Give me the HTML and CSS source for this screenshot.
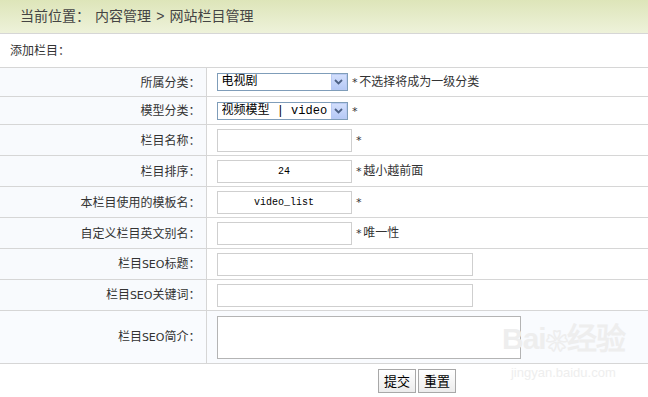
FILE: index.html
```html
<!DOCTYPE html>
<html lang="zh-CN">
<head>
<meta charset="utf-8">
<title>网站栏目管理</title>
<link rel="stylesheet" href="styles.css">
</head>
<body>
<div class="page">
  <div class="crumb">当前位置：<span class="crumb-gap"></span>内容管理 <span class="crumb-sep">&gt;</span> 网站栏目管理</div>
  <div class="title">添加栏目：</div>
  <table class="form">
    <tr class="row-sel">
      <th>所属分类：</th>
      <td><div class="field">
        <span class="combo"><select><option>电视剧</option></select><i class="combo-btn"><svg width="9" height="6" viewBox="0 0 9 6"><path d="M1 1 L4.5 4.5 L8 1" fill="none" stroke="#4d6185" stroke-width="1.8"/></svg></i></span>
        <span class="note"><b class="star">*</b>不选择将成为一级分类</span>
      </div></td>
    </tr>
    <tr class="row-sel row-sel2">
      <th>模型分类：</th>
      <td><div class="field">
        <span class="combo"><select><option>视频模型 | video</option></select><i class="combo-btn"><svg width="9" height="6" viewBox="0 0 9 6"><path d="M1 1 L4.5 4.5 L8 1" fill="none" stroke="#4d6185" stroke-width="1.8"/></svg></i></span>
        <span class="note"><b class="star">*</b></span>
      </div></td>
    </tr>
    <tr class="row-in">
      <th>栏目名称：</th>
      <td><div class="field"><input class="txt" type="text" value=""><span class="note"><b class="star">*</b></span></div></td>
    </tr>
    <tr class="row-in">
      <th>栏目排序：</th>
      <td><div class="field"><input class="txt center" type="text" value="24"><span class="note"><b class="star">*</b>越小越前面</span></div></td>
    </tr>
    <tr class="row-in">
      <th>本栏目使用的模板名：</th>
      <td><div class="field"><input class="txt center" type="text" value="video_list"><span class="note"><b class="star">*</b></span></div></td>
    </tr>
    <tr class="row-in">
      <th>自定义栏目英文别名：</th>
      <td><div class="field"><input class="txt" type="text" value=""><span class="note"><b class="star">*</b>唯一性</span></div></td>
    </tr>
    <tr class="row-in">
      <th>栏目<span class="lat">SEO</span>标题：</th>
      <td><div class="field"><input class="txt wide" type="text" value=""></div></td>
    </tr>
    <tr class="row-in">
      <th>栏目<span class="lat">SEO</span>关键词：</th>
      <td><div class="field"><input class="txt wide" type="text" value=""></div></td>
    </tr>
    <tr class="row-area">
      <th>栏目<span class="lat">SEO</span>简介：</th>
      <td><div class="field"><textarea class="area"></textarea></div></td>
    </tr>
    <tr class="row-btn">
      <td colspan="2" class="btn-cell"><div class="btns"><button type="submit" class="btn">提交</button><button type="reset" class="btn">重置</button></div></td>
    </tr>
  </table>
  <div class="watermark"><span class="wm-logo">Bai<span class="wm-paw">❀</span>经验</span><span class="wm-url">jingyan.baidu.com</span></div>
</div>
</body>
</html>
```

FILE: styles.css
```css
html, body {
  margin: 0;
  padding: 0;
  background: #fff;
}
body {
  font: 12px/1.2 "Noto Sans CJK SC", "Liberation Sans", sans-serif;
  color: #333;
}
.page {
  position: relative;
  width: 648px;
  overflow: hidden;
}
.crumb {
  height: 34px;
  line-height: 31px;
  box-sizing: border-box;
  padding-left: 20px;
  font-size: 14px;
  color: #444;
  background: linear-gradient(#dde5b9, #eef2da);
  border-bottom: 1px solid #d6d6d6;
}
.crumb-gap {
  display: inline-block;
  width: 5px;
}
.crumb-sep {
  font-family: "Liberation Sans", sans-serif;
  margin: 0 2px;
}
.title {
  height: 34px;
  box-sizing: border-box;
  line-height: 32px;
  padding-left: 10px;
  border-bottom: 1px solid #d6d6d6;
}
.form {
  width: 100%;
  border-collapse: collapse;
}
.form th {
  width: 206px;
  box-sizing: border-box;
  padding: 0 5px 0 0;
  text-align: right;
  font-weight: normal;
  background: #f8fafd;
  border-right: 1px solid #d6d6d6;
  border-bottom: 1px solid #d6d6d6;
  white-space: nowrap;
}
.form td {
  padding: 0 0 0 10px;
  border-bottom: 1px solid #d6d6d6;
}
.row-sel th, .row-sel td { height: 28px; }
.row-sel2 th, .row-sel2 td { height: 27px; }
.row-in th, .row-in td { height: 30px; }
.row-area th, .row-area td { height: 52px; background: #f9fbfe; }
.row-btn td { height: 33px; }
.lat {
  font-family: "DejaVu Sans", sans-serif;
  font-size: 11px;
}
.field {
  display: flex;
  align-items: center;
}
.combo {
  position: relative;
  display: inline-block;
  width: 131px;
  height: 18px;
}
.combo select {
  appearance: none;
  -webkit-appearance: none;
  width: 131px;
  height: 18px;
  box-sizing: border-box;
  border: 1px solid #7f9db9;
  border-radius: 0;
  background: #fff;
  padding: 0 16px 0 4px;
  margin: 0;
  font: 12px "Liberation Mono", "Noto Sans CJK SC", monospace;
  line-height: 16px;
  color: #000;
  outline: none;
}
.combo-btn {
  position: absolute;
  right: 1px;
  top: 1px;
  width: 16px;
  height: 16px;
  box-sizing: border-box;
  border: 1px solid #b9caf3;
  background: linear-gradient(#d2defc, #b6c9f6);
  display: flex;
  align-items: center;
  justify-content: center;
}
.note {
  margin-left: 4px;
  color: #333;
  white-space: nowrap;
}
.star {
  font-weight: normal;
  font-family: "DejaVu Sans Mono", monospace;
  font-size: 11px;
  margin-right: 1px;
}
.txt {
  width: 135px;
  height: 23px;
  box-sizing: border-box;
  border: 1px solid #cfcfcf;
  border-radius: 0;
  padding: 0 4px;
  margin: 0;
  font: 10px/14px "Liberation Mono", monospace;
  color: #000;
  background: #fff;
  outline: none;
}
.txt.center { text-align: center; }
.txt.wide { width: 256px; }
.area {
  width: 304px;
  height: 43px;
  box-sizing: border-box;
  border: 1px solid #b4b4b4;
  margin: 0;
  padding: 2px;
  resize: none;
  background: #fff;
  font: 12px "Noto Sans CJK SC", sans-serif;
  outline: none;
}
.btn-cell {
  padding-left: 0 !important;
}
.btns {
  display: flex;
  gap: 2px;
  padding-left: 378px;
}
.btn {
  width: 38px;
  height: 24px;
  box-sizing: border-box;
  border: 1px solid #a8a8a8;
  border-radius: 0;
  background: linear-gradient(#ffffff, #ececec);
  padding: 0;
  margin: 0;
  font: 13px "Noto Sans CJK SC", sans-serif;
  color: #000;
}
.watermark {
  position: absolute;
  left: 502px;
  top: 322px;
  display: flex;
  flex-direction: column;
  align-items: center;
  color: #eeeeee;
  pointer-events: none;
}
.wm-logo {
  font: bold 30px "Liberation Sans", sans-serif;
  letter-spacing: -1px;
  line-height: 34px;
}
.wm-paw {
  font-size: 22px;
}
.wm-url {
  font: 13px "Liberation Sans", sans-serif;
  line-height: 16px;
  margin-top: 6px;
}
```
